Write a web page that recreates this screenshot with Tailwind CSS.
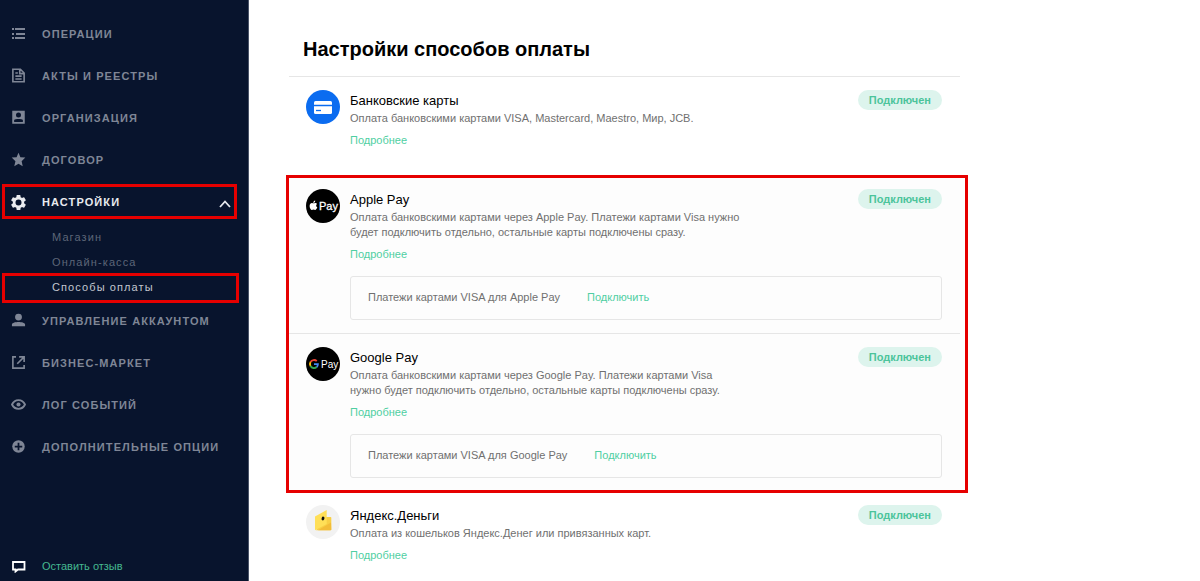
<!DOCTYPE html>
<html lang="ru">
<head>
  <meta charset="UTF-8" />
  <meta name="viewport" content="width=device-width, initial-scale=1.0"/>
  <title>Настройки способов оплаты</title>
  <script src="https://cdn.jsdelivr.net/npm/@tailwindcss/browser@4"></script>
</head>
<body class="flex min-h-screen bg-white font-['Liberation_Sans',Arial,sans-serif] text-[11px] text-[#707070]">

  <!-- Sidebar -->
  <aside class="flex w-[249px] shrink-0 flex-col border-r border-[#4a5468] bg-[#08142d] pt-[13px] pb-1">
    <nav class="font-bold tracking-widest text-[#7f8696]">
      <a href="#" class="flex h-[42px] items-center gap-4 pl-[11px]">
        <svg class="mb-[2px] size-[15px]" viewBox="0 0 15 15" fill="currentColor"><path d="M1 2h2v2H1zM4 2h10v2H4zM1 7h2v2H1zM5 7h9v2H5zM1 11h2v2H1zM4 11h10v2H4z"/></svg>
        <span>ОПЕРАЦИИ</span>
      </a>
      <a href="#" class="flex h-[42px] items-center gap-4 pl-[11px]">
        <svg class="mb-[2px] size-[15px]" viewBox="0 0 24 24" fill="none" stroke="currentColor" stroke-width="2.6"><path d="M3 2h12l6 6v14H3zM14 2v7h7M7 8h4M7 13h10M7 17.500h10"/></svg>
        <span>АКТЫ И РЕЕСТРЫ</span>
      </a>
      <a href="#" class="flex h-[42px] items-center gap-4 pl-[11px]">
        <svg class="mb-[2px] size-[15px]" viewBox="0 0 24 24" fill="currentColor"><path fill-rule="evenodd" d="M2 1h20v21H2zM12 4a4 4 0 1 0 0 8 4 4 0 0 0 0-8zM5 16v3h14v-3c-2-2-12-2-14 0z"/></svg>
        <span>ОРГАНИЗАЦИЯ</span>
      </a>
      <a href="#" class="flex h-[42px] items-center gap-4 pl-[11px]">
        <svg class="mb-[2px] size-[15px]" viewBox="1 1 22 22" fill="currentColor"><path d="M12 18.300 18.200 22l-1.600-7.500L22 9.200l-7.200-.6L12 2 9.200 8.600 2 9.200l5.500 5.300L5.800 22z"/></svg>
        <span>ДОГОВОР</span>
      </a>
      <a href="#" class="relative flex h-[42px] items-center gap-4 pr-[17px] pl-[11px] text-[#e9ebef]">
        <span class="absolute top-[3px] right-[11px] bottom-1 left-[2px] border-3 border-[#e60000]"></span>
        <svg class="size-[15px]" viewBox="2 2 20 20" fill="currentColor"><path fill-rule="evenodd" d="M19.430 12.980c.04-.32.07-.64.07-.98s-.03-.66-.07-.98l2.110-1.650c.19-.15.24-.42.12-.64l-2-3.460c-.12-.22-.39-.3-.61-.22l-2.490 1c-.52-.4-1.080-.73-1.690-.98l-.38-2.650A.488.488 0 0 0 14 2h-4c-.25 0-.46.18-.49.42l-.38 2.650c-.61.25-1.170.59-1.690.98l-2.490-1c-.23-.09-.49 0-.61.22l-2 3.460c-.13.22-.07.49.12.64l2.110 1.650c-.04.32-.07.65-.07.98s.03.66.07.98l-2.110 1.650c-.19.15-.24.42-.12.64l2 3.460c.12.22.39.3.61.22l2.490-1c.52.4 1.080.73 1.690.98l.38 2.650c.03.24.24.42.49.42h4c.25 0 .46-.18.49-.42l.38-2.650c.61-.25 1.170-.59 1.690-.98l2.490 1c.23.09.49 0 .61-.22l2-3.460c.12-.22.07-.49-.12-.64zM12 16a4 4 0 1 1 0-8 4 4 0 0 1 0 8z"/></svg>
        <span>НАСТРОЙКИ</span>
        <svg class="mt-1 ml-auto h-2 w-3" viewBox="0 0 12 8" fill="none" stroke="currentColor" stroke-width="1.800"><path d="M1 7l5-5.500L11 7"/></svg>
      </a>
      <div class="pt-[2px] font-normal text-[#5d6678]">
        <a href="#" class="flex h-[25px] items-center pl-[52px]">Магазин</a>
        <a href="#" class="flex h-[25px] items-center pl-[52px]">Онлайн-касса</a>
        <a href="#" class="relative flex h-[25px] items-center pl-[52px] text-[#c3c7cf]">
          <span class="absolute -top-[2px] right-[9px] -bottom-[3px] left-[2px] border-3 border-[#e60000]"></span>
          Способы оплаты
        </a>
      </div>
      <a href="#" class="flex h-[42px] items-center gap-4 pl-[11px]">
        <svg class="mb-[2px] size-[15px]" viewBox="0 0 24 24" fill="currentColor"><path d="M12 1a5.500 5.500 0 1 0 0 11 5.500 5.500 0 0 0 0-11zM1.500 21v-3c1-5 20-5 21 0v3z"/></svg>
        <span>УПРАВЛЕНИЕ АККАУНТОМ</span>
      </a>
      <a href="#" class="flex h-[42px] items-center gap-4 pl-[11px]">
        <svg class="mb-[2px] size-[15px]" viewBox="0 0 24 24" fill="none" stroke="currentColor" stroke-width="2.600"><path d="M8 3H3v18h18v-5M13 3h8v8M21 3 10 14"/></svg>
        <span>БИЗНЕС-МАРКЕТ</span>
      </a>
      <a href="#" class="flex h-[42px] items-center gap-4 pl-[11px]">
        <svg class="mb-[2px] size-[15px]" viewBox="1 1 22 22" fill="none" stroke="currentColor" stroke-width="2.800"><path d="M2.500 12c4-8.500 15-8.500 19 0-4 8.500-15 8.500-19 0z"/><circle cx="12" cy="12" r="3" fill="currentColor" stroke="none"/></svg>
        <span>ЛОГ СОБЫТИЙ</span>
      </a>
      <a href="#" class="flex h-[42px] items-center gap-4 pl-[11px]">
        <svg class="mb-[2px] size-[15px]" viewBox="0 0 24 24"><circle cx="12" cy="12" r="10" fill="currentColor"/><path d="M12 6v12M6 12h12" stroke="#08142d" stroke-width="2.800"/></svg>
        <span>ДОПОЛНИТЕЛЬНЫЕ ОПЦИИ</span>
      </a>
    </nav>
    <a href="#" class="mt-auto flex items-center gap-4 pb-[3px] pl-[11px] text-[#45b890]">
      <svg class="size-[15px] text-white" viewBox="0 0 15 15" fill="none" stroke="currentColor" stroke-width="1.800"><path d="M2 4h11.500v7.500H7L4.500 13.500v-2H2z"/></svg>
      <span>Оставить отзыв</span>
    </a>
  </aside>

  <!-- Payment methods -->
  <main class="mr-10 ml-10 max-w-[671px] flex-1">
    <h1 class="px-[14px] pt-[34px] pb-3 text-[20px] leading-[30px] font-bold text-black">Настройки способов оплаты</h1>

    <section class="flex gap-[10px] border-t border-[#e6e6e6] pt-[13px] pr-[18px] pb-[27px] pl-[17px]">
      <svg class="size-[34px] shrink-0" viewBox="0 0 34 34"><circle cx="17" cy="17" r="17" fill="#0b6cf0"/><rect x="8" y="11" width="18" height="13" rx="1.500" fill="#fff"/><path d="M8 15.500h18" stroke="#0b6cf0" stroke-width="1.500"/><path d="M10 20.500h5" stroke="#0b6cf0" stroke-width="1.300"/></svg>
      <div class="flex-1">
        <div class="flex justify-between">
          <h2 class="text-[13px] leading-[21px] text-black">Банковские карты</h2>
          <span class="h-5 rounded-full bg-[#ddf4ed] px-[11px] leading-[21px] font-bold text-[#4cc49b]">Подключен</span>
        </div>
        <p class="max-w-[394px] leading-[15px]">Оплата банковскими картами VISA, Mastercard, Maestro, Мир, JCB.</p>
        <a href="#" class="mt-[6px] block leading-4 text-[#4fcfa2]">Подробнее</a>
      </div>
    </section>

    <div class="relative">
      <div class="pointer-events-none absolute top-0 -right-2 -bottom-[2px] -left-[3px] z-10 border-3 border-[#e60000]"></div>

      <section class="flex gap-[10px] border-t border-[#e6e6e6] bg-[#fdfdfd] pt-[13px] pr-[18px] pb-[13px] pl-[17px]">
        <svg class="size-[34px] shrink-0" viewBox="0 0 34 34"><circle cx="17" cy="17" r="17" fill="#000"/><path d="M7.500 14.300c1 0 1.300-.4 2.100-.2.600.1 1.100.4 1.400.8-1.300.9-1 2.700.3 3.300-.4 1.300-1.300 2.700-2.200 2.700-.6 0-.9-.4-1.600-.4s-1 .4-1.600.4c-1.100 0-2.300-2.200-2.300-4 0-1.900 1.200-3 2.400-3 .6 0 1 .4 1.500.4zM7.300 13.900c0-1.300.8-2.200 1.900-2.400.1 1.300-.7 2.300-1.900 2.400z" fill="#fff"/><text x="13" y="20.500" font-size="11" fill="#fff" stroke="#fff" stroke-width=".3">Pay</text></svg>
        <div class="flex-1">
          <div class="flex justify-between">
            <h2 class="text-[13px] leading-[21px] text-black">Apple Pay</h2>
            <span class="h-5 rounded-full bg-[#ddf4ed] px-[11px] leading-[21px] font-bold text-[#4cc49b]">Подключен</span>
          </div>
          <p class="max-w-[394px] leading-[15px]">Оплата банковскими картами через Apple Pay. Платежи картами Visa нужно будет подключить отдельно, остальные карты подключены сразу.</p>
          <a href="#" class="mt-[6px] block leading-4 text-[#4fcfa2]">Подробнее</a>
          <div class="mt-[14px] flex h-11 items-center gap-[27px] rounded-[3px] border border-[#e6e6e6] px-[17px] pb-px">
            <span>Платежи картами VISA для Apple Pay</span>
            <button type="button" class="text-[#4fcfa2]">Подключить</button>
          </div>
        </div>
      </section>

      <section class="flex gap-[10px] border-t border-[#e6e6e6] bg-[#fdfdfd] pt-[13px] pr-[18px] pb-[13px] pl-[17px]">
        <svg class="size-[34px] shrink-0" viewBox="0 0 34 34"><circle cx="17" cy="17" r="17" fill="#000"/><g fill="none" stroke-width="1.800"><path d="M10.800 14.200A4 4 0 0 0 4.500 15" stroke="#ea4335"/><path d="M4.500 15a4 4 0 0 0 0 4" stroke="#fbbc04"/><path d="M4.500 19a4 4 0 0 0 6.200 1" stroke="#34a853"/><path d="M10.700 20a4 4 0 0 0 1.200-2.800H8" stroke="#4285f4"/></g><text x="15" y="20.500" font-size="10" fill="#fff">Pay</text></svg>
        <div class="flex-1">
          <div class="flex justify-between">
            <h2 class="text-[13px] leading-[21px] text-black">Google Pay</h2>
            <span class="h-5 rounded-full bg-[#ddf4ed] px-[11px] leading-[21px] font-bold text-[#4cc49b]">Подключен</span>
          </div>
          <p class="max-w-[394px] leading-[15px]">Оплата банковскими картами через Google Pay. Платежи картами Visa нужно будет подключить отдельно, остальные карты подключены сразу.</p>
          <a href="#" class="mt-[6px] block leading-4 text-[#4fcfa2]">Подробнее</a>
          <div class="mt-[14px] flex h-11 items-center gap-[27px] rounded-[3px] border border-[#e6e6e6] px-[17px] pb-px">
            <span>Платежи картами VISA для Google Pay</span>
            <button type="button" class="text-[#4fcfa2]">Подключить</button>
          </div>
        </div>
      </section>
    </div>

    <section class="flex gap-[10px] border-t border-[#e6e6e6] pt-[13px] pr-[18px] pb-4 pl-[17px]">
      <svg class="size-[34px] shrink-0" viewBox="0 0 34 34"><circle cx="17" cy="17" r="17" fill="#f2f2f2"/><path d="M19 12h5.500q.8 0 .8.800V24.500q0 .8-.8.800H10z" fill="#f8cf45"/><path d="M25 17.500 12 25.300h12.500q.8 0 .8-.8z" fill="#f3bd38"/><path d="M9 11.500 20.700 5v14L9 25.300z" fill="#ffdf57"/><ellipse cx="17" cy="13.500" rx="1.400" ry="1.900" transform="rotate(20 17 13.500)" fill="#111"/></svg>
      <div class="flex-1">
        <div class="flex justify-between">
          <h2 class="text-[13px] leading-[21px] text-black">Яндекс.Деньги</h2>
          <span class="h-5 rounded-full bg-[#ddf4ed] px-[11px] leading-[21px] font-bold text-[#4cc49b]">Подключен</span>
        </div>
        <p class="max-w-[394px] leading-[15px]">Оплата из кошельков Яндекс.Денег или привязанных карт.</p>
        <a href="#" class="mt-[6px] block leading-4 text-[#4fcfa2]">Подробнее</a>
      </div>
    </section>
  </main>

</body>
</html>
